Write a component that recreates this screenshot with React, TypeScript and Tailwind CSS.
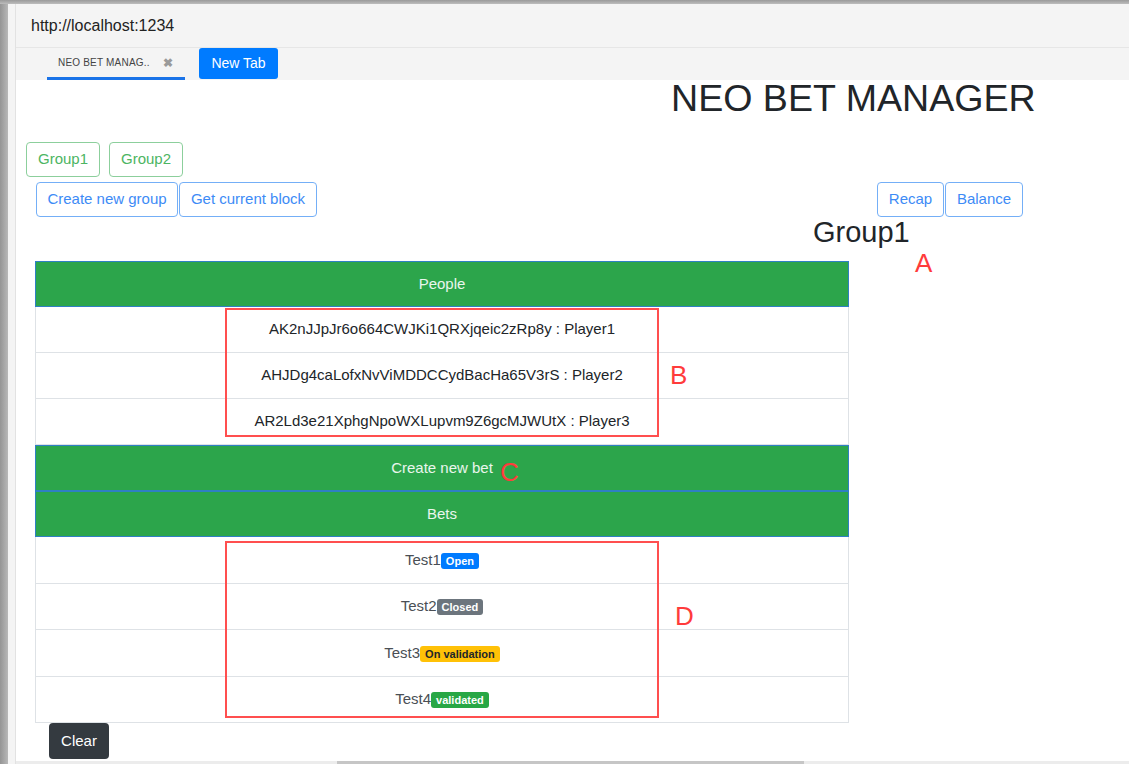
const font = { fontFamily: '"Liberation Sans", Arial, sans-serif' };

const people = [
  'AK2nJJpJr6o664CWJKi1QRXjqeic2zRp8y : Player1',
  'AHJDg4caLofxNvViMDDCCydBacHa65V3rS : Player2',
  'AR2Ld3e21XphgNpoWXLupvm9Z6gcMJWUtX : Player3',
];

const bets = [
  { name: 'Test1', status: 'Open', badge: 'bg-[#007bff] text-white' },
  { name: 'Test2', status: 'Closed', badge: 'bg-[#6c757d] text-white' },
  { name: 'Test3', status: 'On validation', badge: 'bg-[#ffc107] text-[#212529]' },
  { name: 'Test4', status: 'validated', badge: 'bg-[#28a745] text-white' },
];

function GreenRow({ children }: { children: React.ReactNode }) {
  return (
    <div className="h-[46px] flex items-center justify-center bg-[#2ca54b] border border-[#2f80c4] text-[15px] text-white/90">
      {children}
    </div>
  );
}

function Row({ children, tall }: { children: React.ReactNode; tall?: boolean }) {
  return (
    <div
      className={`${tall ? 'h-[46.5px]' : 'h-[46px]'} flex items-center justify-center border-x border-b border-[#dee2e6] text-[15px] text-[#212529]`}
    >
      {children}
    </div>
  );
}

function Mark({ letter, className }: { letter: string; className: string }) {
  return <span className={`absolute text-[26px] leading-none text-[#ff3b3b] ${className}`}>{letter}</span>;
}

export default function App() {
  return (
    <div className="w-[1129px] h-[764px] overflow-hidden flex flex-col bg-white" style={font}>
      <div className="h-[4px] bg-gradient-to-b from-[#9a9a9a] to-[#bdbdbd]" />
      <div className="flex flex-1 min-h-0">
        <div className="w-[8px] bg-gradient-to-r from-[#959595] to-[#b8b8b8]" />
        <div className="w-[8px] bg-[#f4f4f4] border-r border-[#e2e2e2]" />

        <div className="flex-1 flex flex-col min-w-0">
          <div className="h-[43px] bg-[#f4f4f4] flex items-center px-[15px] text-[16px] text-[#222]">
            http://localhost:1234
          </div>
          <div className="h-[33px] bg-[#f4f4f4] border-t border-[#e6e6e6] flex items-end">
            <div className="ml-[31px] w-[138px] h-full flex items-center border-b-[3px] border-[#1a73e8] pl-[11px]">
              <span className="text-[10px] text-[#444] tracking-[0.2px]">NEO BET MANAG..</span>
              <span className="ml-[13px] text-[12px] font-bold text-[#9a9a9a] leading-none">✖</span>
            </div>
            <div className="ml-[14px] mb-[1px] w-[79px] h-[31px] rounded-[3px] bg-[#007bff] text-white text-[14px] flex items-center justify-center">
              New Tab
            </div>
          </div>

          <div className="relative flex-1 flex flex-col min-h-0">
            <h1 className="ml-[655px] h-[37px] text-[37.6px] leading-none text-[#212529]">NEO BET MANAGER</h1>

            <div className="mt-[25px] ml-[10px] flex gap-[9px]">
              {['Group1', 'Group2'].map((g) => (
                <button
                  key={g}
                  type="button"
                  className="h-[35px] w-[74px] rounded-[4px] border border-[#8ccf9c] text-[#4cb562] text-[15px]"
                >
                  {g}
                </button>
              ))}
            </div>

            <div className="mt-[5px] ml-[20px] w-[987px] flex justify-between">
              <div className="flex">
                <button type="button" className="h-[35px] w-[142px] rounded-[4px] border border-[#74aff7] text-[#3d8bf6] text-[15px]">
                  Create new group
                </button>
                <button type="button" className="ml-[1px] h-[35px] w-[138px] rounded-[4px] border border-[#74aff7] text-[#3d8bf6] text-[15px]">
                  Get current block
                </button>
              </div>
              <div className="flex">
                <button type="button" className="h-[35px] w-[67px] rounded-[4px] border border-[#74aff7] text-[#3d8bf6] text-[15px]">
                  Recap
                </button>
                <button type="button" className="ml-[1px] h-[35px] w-[78px] rounded-[4px] border border-[#74aff7] text-[#3d8bf6] text-[15px]">
                  Balance
                </button>
              </div>
            </div>

            <h2 className="ml-[797px] mt-[1px] h-[29px] text-[29px] leading-none text-[#212529]">Group1</h2>

            <div className="mt-[14px] ml-[19px] w-[814px] flex flex-col">
              <GreenRow>People</GreenRow>
              {people.map((p) => (
                <Row key={p}>{p}</Row>
              ))}
              <GreenRow>Create new bet</GreenRow>
              <GreenRow>Bets</GreenRow>
              {bets.map((b) => (
                <Row key={b.name} tall>
                  <span className="text-[#4a4f55]">
                    {b.name}
                    <span className={`inline-block h-[16px] leading-[16px] px-[5px] rounded-[3px] text-[11px] font-bold ${b.badge}`}>
                      {b.status}
                    </span>
                  </span>
                </Row>
              ))}
            </div>

            <button
              type="button"
              className="ml-[33px] w-[60px] h-[36px] rounded-[4px] bg-[#343a40] text-white text-[15px]"
            >
              Clear
            </button>

            <div className="absolute left-[209px] top-[228px] w-[434px] h-[129px] border-2 border-[#ff4f4f]" />
            <div className="absolute left-[209px] top-[461px] w-[434px] h-[177px] border-2 border-[#ff4f4f]" />
            <Mark letter="A" className="left-[899px] top-[170px]" />
            <Mark letter="B" className="left-[654px] top-[282px]" />
            <Mark letter="C" className="left-[484px] top-[379px]" />
            <Mark letter="D" className="left-[659px] top-[523px]" />
          </div>

          <div className="h-[3px] bg-[#ececec] flex">
            <div className="ml-[321px] w-[467px] bg-[#c6c6c6]" />
          </div>
        </div>
      </div>
    </div>
  );
}
